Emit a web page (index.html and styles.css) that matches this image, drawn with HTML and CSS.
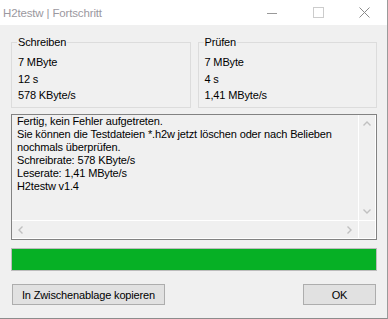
FILE: index.html
```html
<!DOCTYPE html>
<html lang="de">
<head>
    <meta charset="UTF-8">
    <meta name="viewport" content="width=device-width, initial-scale=1.0">
    <title>H2testw | Fortschritt</title>
    <link rel="stylesheet" href="styles.css">
</head>
<body>

<div class="window">
    <!-- Title bar -->
    <div class="titlebar">
        <span class="title">H2testw | Fortschritt</span>
        <div class="caption-buttons">
            <span class="cap-btn">
                <svg width="10" height="10" viewBox="0 0 10 10"><line x1="0" y1="5.5" x2="10" y2="5.5" stroke="#999" stroke-width="1"/></svg>
            </span>
            <span class="cap-btn">
                <svg width="11" height="11" viewBox="0 0 11 11"><rect x="0.5" y="0.5" width="10" height="10" fill="none" stroke="#ccc" stroke-width="1"/></svg>
            </span>
            <span class="cap-btn">
                <svg width="11" height="11" viewBox="0 0 11 11"><path d="M0.5 0.5 L10.5 10.5 M10.5 0.5 L0.5 10.5" stroke="#8a8a8a" stroke-width="1"/></svg>
            </span>
        </div>
    </div>

    <div class="client">
        <!-- Write / verify summary -->
        <div class="groups">
            <fieldset class="group">
                <legend>Schreiben</legend>
                <div class="row">7 MByte</div>
                <div class="row">12 s</div>
                <div class="row">578 KByte/s</div>
            </fieldset>
            <fieldset class="group">
                <legend>Prüfen</legend>
                <div class="row">7 MByte</div>
                <div class="row">4 s</div>
                <div class="row">1,41 MByte/s</div>
            </fieldset>
        </div>

        <!-- Result log -->
        <div class="log">
            <div class="log-inner">
                <div class="log-text">
                    Fertig, kein Fehler aufgetreten.<br>
                    Sie können die Testdateien *.h2w jetzt löschen oder nach Belieben<br>
                    nochmals überprüfen.<br>
                    Schreibrate: 578 KByte/s<br>
                    Leserate: 1,41 MByte/s<br>
                    H2testw v1.4
                </div>
                <div class="vscroll">
                    <span class="arrow">
                        <svg width="8" height="5" viewBox="0 0 8 5"><path d="M0.5 4.5 L4 1 L7.5 4.5" fill="none" stroke="#c0c0c0" stroke-width="1.4"/></svg>
                    </span>
                    <span class="arrow">
                        <svg width="8" height="5" viewBox="0 0 8 5"><path d="M0.5 0.5 L4 4 L7.5 0.5" fill="none" stroke="#c0c0c0" stroke-width="1.4"/></svg>
                    </span>
                </div>
                <div class="hscroll">
                    <span class="arrow">
                        <svg width="5" height="8" viewBox="0 0 5 8"><path d="M4.5 0.5 L1 4 L4.5 7.5" fill="none" stroke="#c0c0c0" stroke-width="1.4"/></svg>
                    </span>
                    <span class="arrow">
                        <svg width="5" height="8" viewBox="0 0 5 8"><path d="M0.5 0.5 L4 4 L0.5 7.5" fill="none" stroke="#c0c0c0" stroke-width="1.4"/></svg>
                    </span>
                </div>
                <div class="corner"></div>
            </div>
        </div>

        <!-- Progress -->
        <div class="progress">
            <div class="progress-fill" style="width: 100%"></div>
        </div>

        <div class="buttons">
            <button class="btn btn-copy">In Zwischenablage kopieren</button>
            <button class="btn btn-ok">OK</button>
        </div>
    </div>
</div>

</body>
</html>
```

FILE: styles.css
```css
/* Dialog window */
body {
    margin: 0;
    padding: 0;
    background-color: #fff;
    font-family: "Liberation Sans", Arial, sans-serif;
    font-size: 11px;
    letter-spacing: -0.15px;
    color: #000;
}
.window {
    width: 388px;
    height: 319px;
    box-sizing: border-box;
    border-right: 1px solid #9a9a9a;
    border-bottom: 1px solid #8c8c8c;
    display: flex;
    flex-direction: column;
}

/* Title bar */
.titlebar {
    height: 25px;
    background-color: #fff;
    display: flex;
    align-items: center;
    justify-content: space-between;
}
.title {
    padding-left: 3px;
    font-size: 11.5px;
    color: #9b98a0;
}
.caption-buttons {
    display: flex;
    height: 100%;
}
.cap-btn {
    width: 46px;
    height: 100%;
    display: flex;
    align-items: center;
    justify-content: center;
}

/* Client area */
.client {
    flex: 1;
    background-color: #f0f0f0;
    padding: 10px 10px 0 11px;
    display: flex;
    flex-direction: column;
}

.groups {
    display: grid;
    grid-template-columns: 1fr 1fr;
    gap: 7px;
}
.group {
    margin: 0;
    padding: 4px 6px 3.5px 6px;
    min-inline-size: 0;
    border: 1px solid #dcdcdc;
}
.group legend {
    padding: 0 1px;
    margin-left: -1px;
    line-height: 15px;
}
.row {
    line-height: 16.5px;
}

/* Read-only text box */
.log {
    margin-top: 6px;
    height: 126px;
    box-sizing: border-box;
    border: 1px solid #828282;
}
.log-inner {
    height: 100%;
    box-sizing: border-box;
    border-right: 1px solid #fff;
    border-bottom: 1px solid #fff;
    display: grid;
    grid-template-columns: 1fr 17px;
    grid-template-rows: 1fr 18px;
}
.log-text {
    padding: 0 4px 0 5px;
    line-height: 13px;
    white-space: nowrap;
    overflow: hidden;
}
.vscroll {
    border-left: 1px solid #fff;
    display: flex;
    flex-direction: column;
    justify-content: space-between;
    align-items: center;
}
.vscroll .arrow {
    height: 17px;
    display: flex;
    align-items: center;
    justify-content: center;
}
.hscroll {
    border-top: 1px solid #fff;
    display: flex;
    justify-content: space-between;
    align-items: center;
}
.hscroll .arrow {
    width: 17px;
    display: flex;
    align-items: center;
    justify-content: center;
}
.corner {
    border-top: 1px solid #fff;
    border-left: 1px solid #fff;
}

/* Progress bar */
.progress {
    margin-top: 8px;
    height: 23px;
    box-sizing: border-box;
    border: 1px solid #bcbcbc;
    background-color: #e6e6e6;
}
.progress-fill {
    height: 100%;
    background-color: #06b025;
}

/* Buttons */
.buttons {
    margin-top: 13px;
    padding: 0 1px;
    display: flex;
    justify-content: space-between;
}
.btn {
    height: 21px;
    box-sizing: border-box;
    padding: 0;
    background-color: #e1e1e1;
    border: 1px solid #adadad;
    font-family: inherit;
    font-size: 11px;
    letter-spacing: -0.15px;
    color: #000;
}
.btn-copy {
    width: 153px;
}
.btn-ok {
    width: 73px;
}
```
